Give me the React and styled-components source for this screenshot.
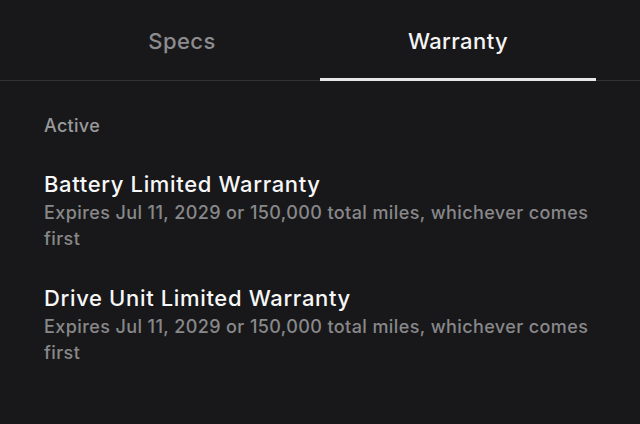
import React from 'react';
import styled, {createGlobalStyle} from 'styled-components';

const GlobalStyle = createGlobalStyle`
  html, body {
    margin: 0;
    padding: 0;
    background: #18181a;
  }
  body {
    font-family: Inter, "Noto Sans", sans-serif;
    -webkit-font-smoothing: antialiased;
  }
`;

const Page = styled.div`
  width: 640px;
  height: 424px;
  background: #18181a;
  overflow: hidden;
`;

const TabBar = styled.div`
  display: flex;
  padding: 0 44px;
  border-bottom: 1px solid #313134;
`;

const Tab = styled.div`
  flex: 1;
  height: 81px;
  display: flex;
  align-items: center;
  justify-content: center;
  font-size: 22px;
  font-weight: 500;
  letter-spacing: 0.4px;
  color: ${props => (props.active ? '#f4f4f4' : '#8c8c8e')};
  box-sizing: border-box;
  border-bottom: 3px solid ${props => (props.active ? '#e6e6e6' : 'transparent')};
  padding-top: 3px;
  margin-bottom: -1px;
`;

const Content = styled.div`
  padding: 34px 44px 0;
`;

const SectionLabel = styled.div`
  font-size: 18px;
  font-weight: 500;
  letter-spacing: 0.3px;
  color: #9a9a9c;
  line-height: 22px;
  margin-bottom: 34px;
`;

const Item = styled.div`
  margin-bottom: 33px;
`;

const Title = styled.div`
  font-size: 22px;
  font-weight: 500;
  letter-spacing: 0.65px;
  color: #f7f7f7;
  line-height: 26px;
  margin-bottom: 3px;
`;

const Detail = styled.div`
  font-size: 18px;
  font-weight: 500;
  letter-spacing: 0.4px;
  color: #88888a;
  line-height: 26px;
  max-width: 552px;
`;

const warranties = [
  {id: 'battery', name: 'Battery Limited Warranty'},
  {id: 'drive', name: 'Drive Unit Limited Warranty'},
];

export default function App() {
  return (
    <Page>
      <GlobalStyle />
      <TabBar>
        <Tab>Specs</Tab>
        <Tab active>Warranty</Tab>
      </TabBar>
      <Content>
        <SectionLabel>Active</SectionLabel>
        {warranties.map(w => (
          <Item key={w.id}>
            <Title>{w.name}</Title>
            <Detail>Expires Jul 11, 2029 or 150,000 total miles, whichever comes first</Detail>
          </Item>
        ))}
      </Content>
    </Page>
  );
}
